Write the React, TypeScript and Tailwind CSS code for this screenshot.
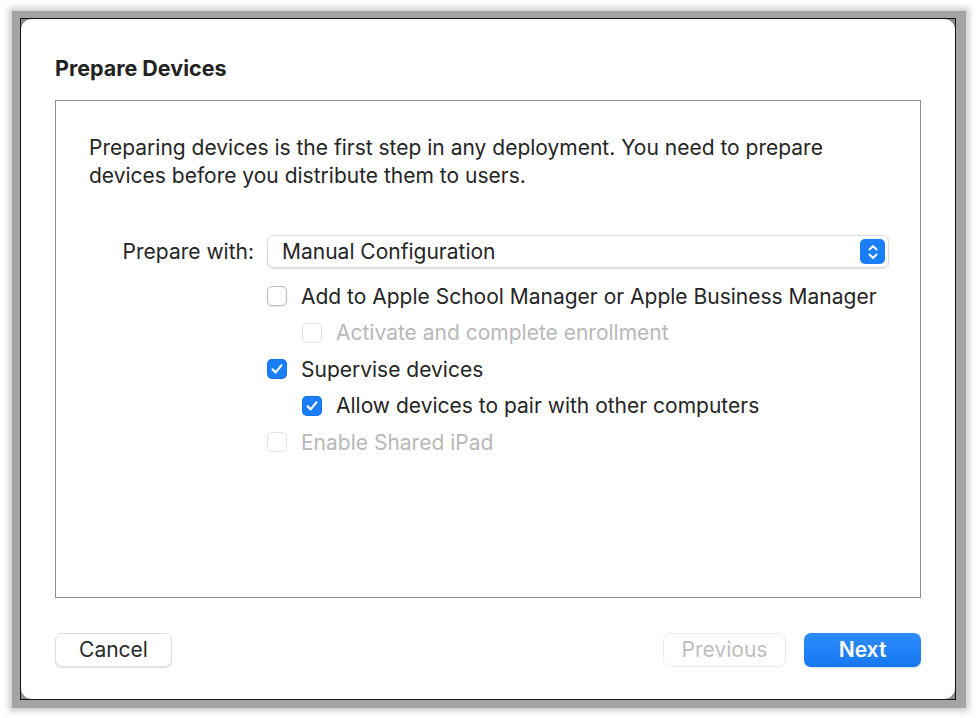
import React from 'react';

const Checkbox: React.FC<{ checked?: boolean; disabled?: boolean }> = ({ checked, disabled }) => {
    if (checked) {
        return (
            <span className="w-[20px] h-[20px] rounded-[5px] bg-[#1a7ef6] flex items-center justify-center shrink-0 shadow-[inset_0_0_0_1px_rgba(0,80,200,0.25)]">
                <svg width="14" height="14" viewBox="0 0 14 14" fill="none">
                    <path d="M2.6 7.4 L5.6 10.4 L11.4 3.4" stroke="white" strokeWidth="2.2" strokeLinecap="round" strokeLinejoin="round" />
                </svg>
            </span>
        );
    }
    return (
        <span
            className={
                disabled
                    ? 'w-[20px] h-[20px] rounded-[5px] border border-[#e2e2e2] bg-white shrink-0'
                    : 'w-[20px] h-[20px] rounded-[5px] border border-[#b9b9b9] bg-white shrink-0 shadow-[0_0.5px_1px_rgba(0,0,0,0.08)]'
            }
        />
    );
};

const Row: React.FC<{ label: string; checked?: boolean; disabled?: boolean; indent?: boolean }> = ({ label, checked, disabled, indent }) => (
    <div className={`flex items-center h-[36.5px] gap-[14px] ${indent ? 'pl-[35px]' : ''}`}>
        <Checkbox checked={checked} disabled={disabled} />
        <span className={disabled ? 'text-[#b8b8b8]' : 'text-[#252525]'}>{label}</span>
    </div>
);

const App: React.FC = () => {
    return (
        <div className="w-[976px] h-[718px] bg-white pt-[11px] pl-[12px]" style={{ fontFamily: 'Inter, "Noto Sans", sans-serif' }}>
            <div className="w-[954px] h-[697px] bg-[#a4a4a4] pl-[8px] pt-[7px] pr-[10px] pb-[8px] shadow-[0_0_6px_3px_rgba(150,150,150,0.5)]">
                <div className="w-full h-full border border-[#141414] bg-[#8c8c8c]">
                    <div className="w-full h-full bg-white rounded-[11px] flex flex-col px-[34px] pt-[36px] pb-[32px]">
                        <h1 className="text-[21.5px] leading-[26px] font-bold text-[#222]">Prepare Devices</h1>

                        <div className="mt-[19px] h-[498px] border border-[#8e8e8e] pl-[33px] pr-[31px] pt-[33px] text-[21px] text-[#252525]">
                            <p className="leading-[28px] w-[790px]">
                                Preparing devices is the first step in any deployment. You need to prepare devices before you distribute them to users.
                            </p>

                            <div className="mt-[45px] flex">
                                <div className="w-[178px] shrink-0 pr-[13px] text-right h-[33px] leading-[33px]">Prepare with:</div>
                                <div className="flex-1 flex flex-col">
                                    <div className="h-[33px] rounded-[6px] border border-[#dcdcdc] shadow-[0_1px_1.5px_rgba(0,0,0,0.12)] flex items-center pl-[14px] pr-[3px] bg-white">
                                        <span className="flex-1">Manual Configuration</span>
                                        <span className="w-[25px] h-[25px] rounded-[5px] bg-[#1a7ef6] flex items-center justify-center">
                                            <svg width="12" height="18" viewBox="0 0 12 18" fill="none">
                                                <path d="M2.5 6.5 L6 3 L9.5 6.5" stroke="white" strokeWidth="1.9" strokeLinecap="round" strokeLinejoin="round" />
                                                <path d="M2.5 11.5 L6 15 L9.5 11.5" stroke="white" strokeWidth="1.9" strokeLinecap="round" strokeLinejoin="round" />
                                            </svg>
                                        </span>
                                    </div>
                                    <div className="mt-[10px] flex flex-col">
                                        <Row label="Add to Apple School Manager or Apple Business Manager" />
                                        <Row label="Activate and complete enrollment" disabled indent />
                                        <Row label="Supervise devices" checked />
                                        <Row label="Allow devices to pair with other computers" checked indent />
                                        <Row label="Enable Shared iPad" disabled />
                                    </div>
                                </div>
                            </div>
                        </div>

                        <div className="mt-auto flex items-center text-[21px]">
                            <button className="w-[117px] h-[34px] rounded-[7px] border border-[#dedede] bg-white shadow-[0_1px_1.5px_rgba(0,0,0,0.12)] text-[#2a2a2a]">
                                Cancel
                            </button>
                            <div className="flex-1" />
                            <button className="w-[123px] h-[34px] rounded-[7px] border border-[#ececec] bg-white text-[#bdbdbd]">
                                Previous
                            </button>
                            <button className="ml-[18px] w-[117px] h-[34px] rounded-[7px] bg-gradient-to-b from-[#2d8cfb] to-[#1577f3] text-white font-semibold shadow-[0_1px_1.5px_rgba(0,0,0,0.15)]">
                                Next
                            </button>
                        </div>
                    </div>
                </div>
            </div>
        </div>
    );
};

export default App;
